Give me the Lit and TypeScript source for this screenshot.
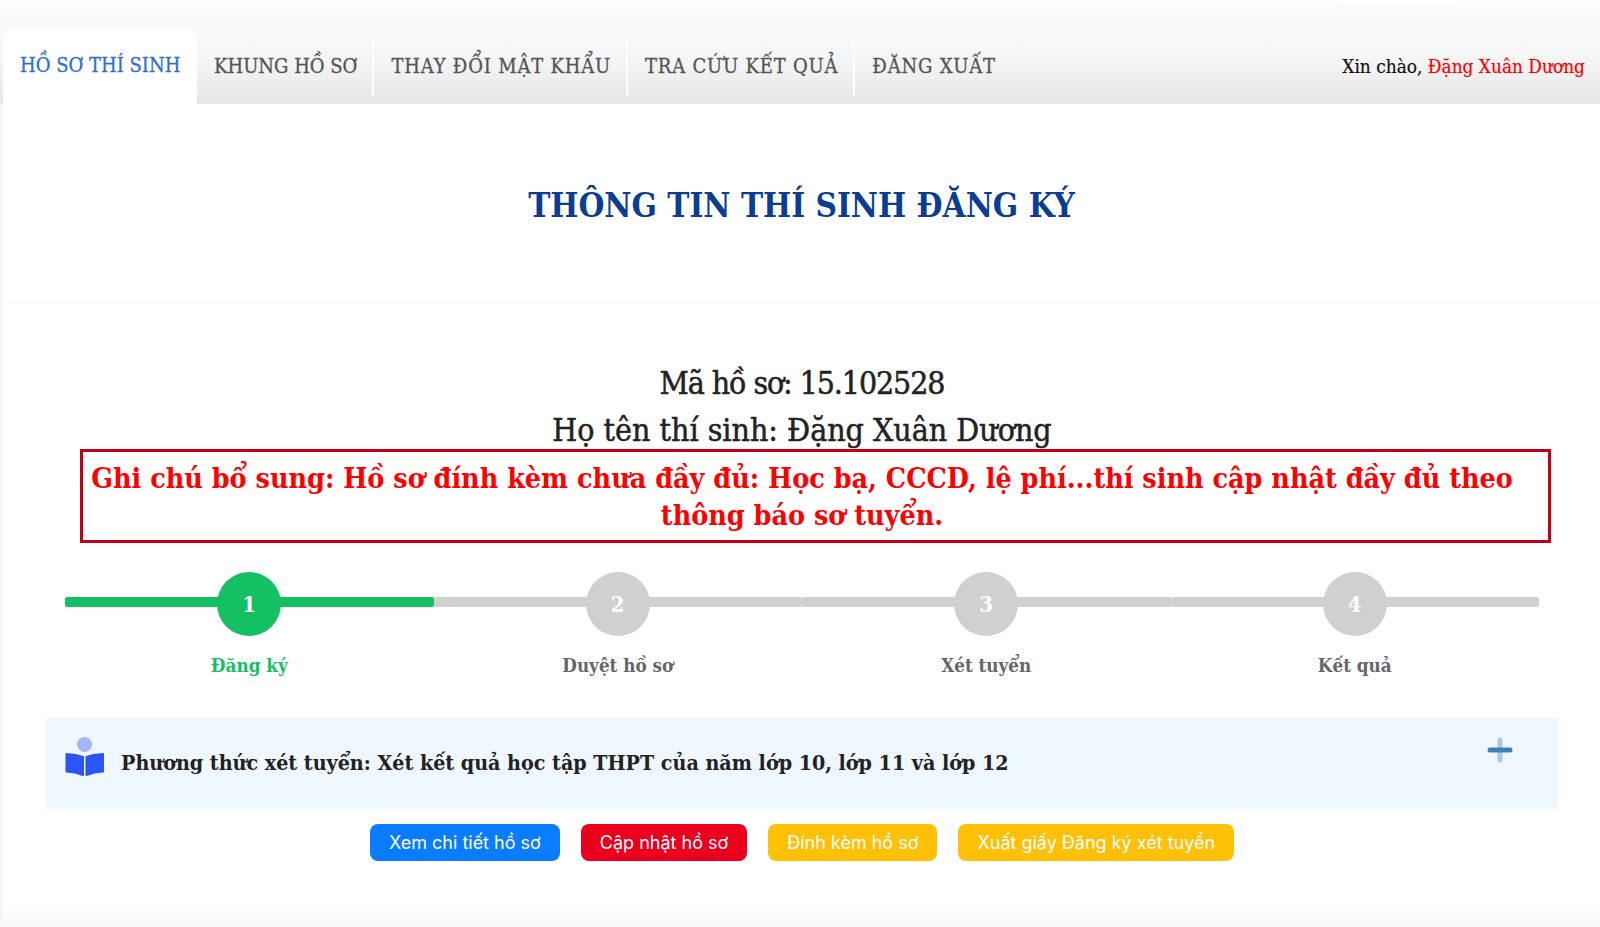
import { LitElement, html, css } from 'lit';
import { customElement } from 'lit/decorators.js';

const tabs = ['KHUNG HỒ SƠ', 'THAY ĐỔI MẬT KHẨU', 'TRA CỨU KẾT QUẢ', 'ĐĂNG XUẤT'];
const steps = ['Đăng ký', 'Duyệt hồ sơ', 'Xét tuyển', 'Kết quả'];

@customElement('app-root')
export class AppRoot extends LitElement {
  static styles = css`
    :host {
      display: block;
      height: 927px;
      overflow: hidden;
      background: linear-gradient(#fff 900px, #f8f8f8);
      box-shadow: inset 3px 0 0 #f6f6f6;
      font-family: 'DejaVu Serif', 'Liberation Serif', serif;
      font-stretch: condensed;
    }
    nav {
      position: relative;
      display: flex;
      align-items: flex-end;
      height: 104px;
      padding-left: 3px;
      background: linear-gradient(#fdfdfd, #f6f6f6 55%, #e6e6e6);
    }
    .corner {
      position: absolute;
      left: 1333px;
      top: 0;
      width: 129px;
      height: 2px;
      background: #fff;
      border-radius: 0 0 4px 4px;
      box-shadow: 0 6px 16px rgba(0, 0, 0, 0.05);
    }
    .tab {
      display: flex;
      align-items: center;
      box-sizing: border-box;
      height: 56px;
      margin-bottom: 8px;
      padding: 0 15px 4px 17px;
      font-size: 20px;
      color: #555;
      border-right: 2px solid #fff;
      -webkit-text-stroke: 0.3px #555;
    }
    .tab.wide { letter-spacing: 0.8px; }
    .tab.active {
      height: 74px;
      width: 194px;
      margin-bottom: 0;
      padding: 0 0 4px 17px;
      background: #fff;
      color: #2f6fd0;
      border: 0;
      border-radius: 10px 10px 0 0;
      -webkit-text-stroke: 0.3px #2f6fd0;
    }
    .tab.last { border: 0; }
    .hello {
      margin-left: auto;
      align-self: center;
      margin-top: 28px;
      padding-right: 15px;
      font-size: 18.9px;
      color: #111;
      -webkit-text-stroke: 0.2px;
    }
    .hello span { color: #f00; }
    h1 {
      margin: 0;
      padding: 80px 0 73px 3px;
      text-align: center;
      font-size: 33.1px;
      line-height: 44px;
      color: #0b3d91;
      box-shadow: 0 1px 3px rgba(0, 0, 0, 0.03);
    }
    .info {
      display: flex;
      flex-direction: column;
      gap: 9px;
      padding: 63px 0 0 4px;
      text-align: center;
      font-size: 31.8px;
      line-height: 38px;
      color: #222;
      -webkit-text-stroke: 0.5px #222;
    }
    .info .code { letter-spacing: -1.1px; }
    .note {
      margin: 0 49px 0 80px;
      padding: 8px 27px 6px 0;
      border: 3px solid #c40018;
      color: #f00;
      font-size: 28.4px;
      line-height: 37px;
      font-weight: 700;
      text-align: center;
    }
    .steps {
      display: grid;
      grid-template-columns: repeat(4, 1fr);
      margin: 29px 61px 0 65px;
    }
    .step {
      display: flex;
      flex-direction: column;
      align-items: center;
      position: relative;
      gap: 17px;
      color: #666;
      font-size: 18.7px;
      line-height: 24px;
      font-weight: 700;
    }
    .step::before {
      content: '';
      position: absolute;
      left: 0;
      right: 0;
      top: 25px;
      height: 10px;
      border-radius: 2px;
      background: #d0d0d0;
    }
    .dot {
      position: relative;
      width: 64px;
      height: 64px;
      border-radius: 50%;
      background: #d0d0d0;
      color: #fff;
      display: flex;
      align-items: center;
      justify-content: center;
      font-size: 22px;
      font-weight: 700;
    }
    .step.on { color: #15c064; }
    .step.on::before, .step.on .dot { background: #15c064; }
    .panel {
      display: flex;
      align-items: center;
      gap: 16px;
      height: 91px;
      margin: 41px 42px 0 46px;
      padding: 0 45px 0 19px;
      background: #eff7ff;
      font-size: 21.25px;
      font-weight: 700;
      color: #222;
    }
    .panel span { padding-bottom: 2px; }
    .book { margin-bottom: 14px; }
    .plus { margin-left: auto; margin-bottom: 27px; }
    .btns {
      display: flex;
      justify-content: center;
      gap: 21px;
      margin-top: 15px;
      padding-left: 4px;
    }
    .btn {
      height: 37px;
      display: flex;
      align-items: center;
      padding: 0 19px;
      border-radius: 8px;
      color: #fff;
      font-family: Inter, Roboto, 'Noto Sans', sans-serif;
      font-stretch: normal;
      font-size: 18px;
    }
    .blue { background: #0a7cff; }
    .red { background: #e8001c; }
    .amber { background: #ffc107; }
  `;

  render() {
    return html`
      <nav>
        <div class="corner"></div>
        <div class="tab active">HỒ SƠ THÍ SINH</div>
        ${tabs.map((t, i) => html`<div class="tab ${i > 0 ? 'wide' : ''} ${i === tabs.length - 1 ? 'last' : ''}">${t}</div>`)}
        <div class="hello">Xin chào, <span>Đặng Xuân Dương</span></div>
      </nav>
      <h1>THÔNG TIN THÍ SINH ĐĂNG KÝ</h1>
      <div class="info">
        <div class="code">Mã hồ sơ: 15.102528</div>
        <div>Họ tên thí sinh: Đặng Xuân Dương</div>
      </div>
      <div class="note">Ghi chú bổ sung: Hồ sơ đính kèm chưa đầy đủ: Học bạ, CCCD, lệ phí...thí sinh cập nhật đầy đủ theo thông báo sơ tuyển.</div>
      <div class="steps">
        ${steps.map((s, i) => html`<div class="step ${i === 0 ? 'on' : ''}"><div class="dot">${i + 1}</div><div>${s}</div></div>`)}
      </div>
      <div class="panel">
        <svg class="book" width="40" height="40" viewBox="0 0 40 40">
          <circle cx="19.5" cy="7.5" r="7.5" fill="#a3b6f9"/>
          <path d="M1.5 17Q11 17.500 18 20V38Q10 35 1.500 34.500ZM38 17Q28 17.500 21.500 20V38Q29 35 38 34.500Z" fill="#2b55f5" stroke="#2b55f5" stroke-width="2" stroke-linejoin="round"/>
        </svg>
        <span>Phương thức xét tuyển: Xét kết quả học tập THPT của năm lớp 10, lớp 11 và lớp 12</span>
        <svg class="plus" width="26" height="26" viewBox="0 0 26 26">
          <path d="M13 3v20" stroke="#a8c8e4" stroke-width="5" stroke-linecap="round"/>
          <path d="M3 13h20" stroke="#3f7fb8" stroke-width="5" stroke-linecap="round"/>
        </svg>
      </div>
      <div class="btns">
        <div class="btn blue">Xem chi tiết hồ sơ</div>
        <div class="btn red">Cập nhật hồ sơ</div>
        <div class="btn amber">Đính kèm hồ sơ</div>
        <div class="btn amber">Xuất giấy Đăng ký xét tuyển</div>
      </div>
    `;
  }
}
